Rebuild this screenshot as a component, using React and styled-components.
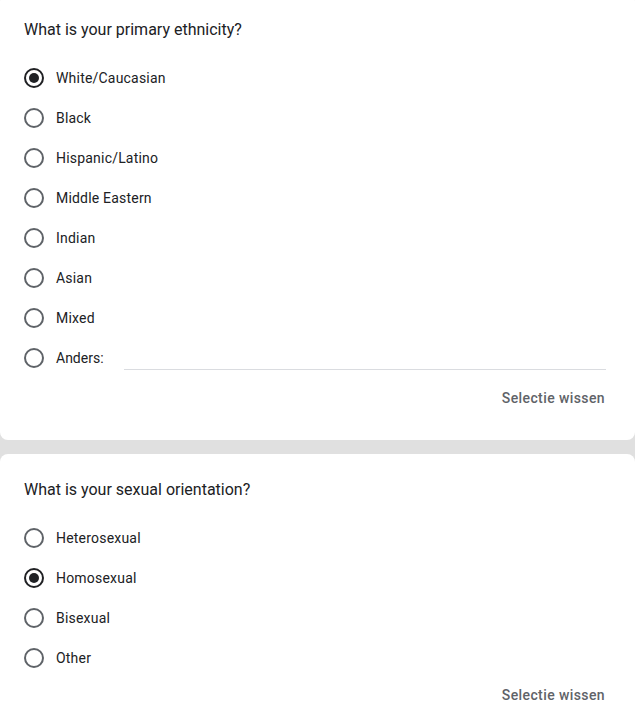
import React from 'react';
import styled, { createGlobalStyle } from 'styled-components';

const GlobalStyle = createGlobalStyle`
  html, body {
    margin: 0;
    padding: 0;
    background: #e0e0e0;
  }
  body {
    font-family: Roboto, 'Noto Sans', Arial, sans-serif;
    color: #202124;
  }
`;

const questions = [
  {
    title: 'What is your primary ethnicity?',
    options: [
      'White/Caucasian',
      'Black',
      'Hispanic/Latino',
      'Middle Eastern',
      'Indian',
      'Asian',
      'Mixed',
    ],
    selected: 'White/Caucasian',
    other: 'Anders:',
  },
  {
    title: 'What is your sexual orientation?',
    options: ['Heterosexual', 'Homosexual', 'Bisexual', 'Other'],
    selected: 'Homosexual',
  },
];

function Radio({ checked }) {
  return (
    <RadioCircle $checked={checked}>
      {checked && <RadioDot />}
    </RadioCircle>
  );
}

function QuestionCard({ question }) {
  return (
    <Card>
      <Title>{question.title}</Title>
      <OptionList>
        {question.options.map((opt) => (
          <OptionRow key={opt}>
            <Radio checked={question.selected === opt} />
            <OptionLabel>{opt}</OptionLabel>
          </OptionRow>
        ))}
        {question.other && (
          <OtherRow>
            <Radio checked={false} />
            <OtherLabel>{question.other}</OtherLabel>
            <OtherInput />
          </OtherRow>
        )}
      </OptionList>
      <Footer>
        <ClearButton>Selectie wissen</ClearButton>
      </Footer>
    </Card>
  );
}

export default function App() {
  return (
    <>
      <GlobalStyle />
      <Page>
        {questions.map((q) => (
          <QuestionCard key={q.title} question={q} />
        ))}
      </Page>
    </>
  );
}

const Page = styled.div`
  display: flex;
  flex-direction: column;
  gap: 14px;
  margin-top: -6px;
`;

const Card = styled.div`
  background: #fff;
  border-radius: 8px;
  padding: 24px;
  display: flex;
  flex-direction: column;
`;

const Title = styled.div`
  font-size: 16px;
  line-height: 24px;
  letter-spacing: 0;
  color: #202124;
`;

const OptionList = styled.div`
  display: flex;
  flex-direction: column;
  margin-top: 15px;
`;

const OptionRow = styled.div`
  display: flex;
  align-items: center;
  height: 40px;
`;

const OtherRow = styled(OptionRow)`
  padding-bottom: 3px;
`;

const RadioCircle = styled.div`
  box-sizing: border-box;
  width: 20px;
  height: 20px;
  margin-top: 1px;
  border-radius: 50%;
  border: 2px solid ${(p) => (p.$checked ? '#202124' : '#5f6368')};
  display: flex;
  align-items: center;
  justify-content: center;
  flex-shrink: 0;
`;

const RadioDot = styled.div`
  width: 10px;
  height: 10px;
  border-radius: 50%;
  background: #202124;
`;

const OptionLabel = styled.span`
  margin-left: 12px;
  margin-top: 1px;
  font-size: 14px;
  line-height: 20px;
  letter-spacing: 0.2px;
  color: #202124;
`;

const OtherLabel = styled(OptionLabel)`
  letter-spacing: 0;
`;

const OtherInput = styled.div`
  flex: 1;
  align-self: flex-start;
  margin: 32px 5px 0 20px;
  height: 1px;
  background: #dadce0;
`;

const Footer = styled.div`
  display: flex;
  justify-content: flex-end;
`;

const ClearButton = styled.div`
  height: 36px;
  padding: 0 6px;
  display: flex;
  align-items: center;
  font-size: 14px;
  font-weight: 500;
  letter-spacing: 0.4px;
  color: #5f6368;
`;
